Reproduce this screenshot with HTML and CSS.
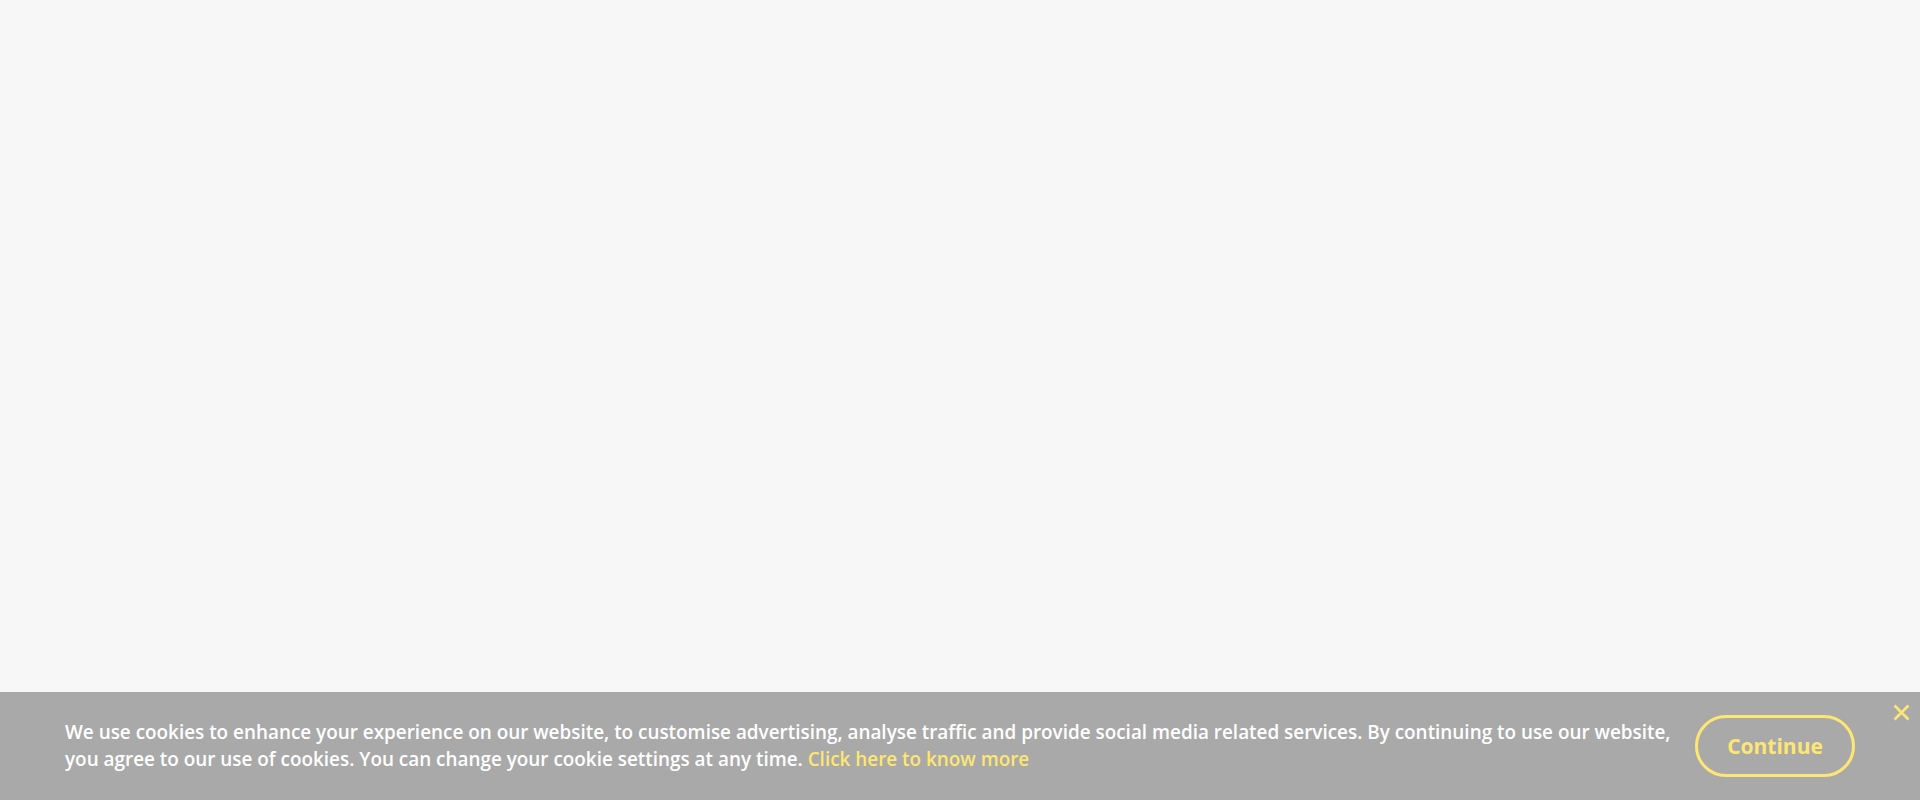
FILE: index.html
```html
<!DOCTYPE html>
<html lang="en">
<head>
<meta charset="utf-8">
<title>Cookies</title>
<link rel="stylesheet" href="styles.css">
</head>
<body>
<main class="page"></main>
<div class="cookie-bar">
  <p class="cookie-text">We use cookies to enhance your experience on our website, to customise advertising, analyse traffic and provide social media related services. By continuing to use our website, you agree to our use of cookies. You can change your cookie settings at any time. <a class="cookie-link" href="#">Click here to know more</a></p>
  <button class="cookie-btn" type="button">Continue</button>
  <button class="cookie-close" type="button" aria-label="Close">
    <svg width="17" height="17" viewBox="0 0 17 17"><path d="M1.5 1.5 L15.5 15.5 M15.5 1.5 L1.5 15.5" stroke="#fee673" stroke-width="2.6" fill="none"/></svg>
  </button>
</div>
</body>
</html>
```
FILE: styles.css
```css
html, body {
  margin: 0;
  padding: 0;
  height: 100%;
}
body {
  background: #f7f7f7;
  font-family: "Open Sans", "Liberation Sans", sans-serif;
  display: flex;
  flex-direction: column;
}
.page {
  flex: 1;
}
.cookie-bar {
  position: relative;
  height: 108px;
  background: #a9a9a9;
  display: flex;
  align-items: center;
  padding: 0 65px;
  box-sizing: border-box;
}
.cookie-text {
  margin: 0;
  width: 1615px;
  color: #ffffff;
  font-size: 18.9px;
  font-weight: 600;
  line-height: 27px;
}
.cookie-link {
  color: #fee673;
  text-decoration: none;
}
.cookie-btn {
  margin-left: 15px;
  width: 160px;
  height: 62px;
  border: 3px solid #fee673;
  border-radius: 31px;
  background: transparent;
  color: #fee673;
  font-family: "Open Sans", "Liberation Sans", sans-serif;
  font-size: 21px;
  font-weight: 700;
  padding: 0;
  flex-shrink: 0;
}
.cookie-close {
  position: absolute;
  top: 11px;
  right: 10px;
  width: 17px;
  height: 19px;
  padding: 0;
  border: 0;
  background: transparent;
  display: flex;
  align-items: center;
  justify-content: center;
}
```
